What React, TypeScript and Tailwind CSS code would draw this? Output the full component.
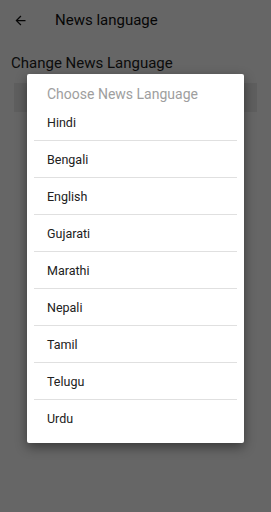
import React from "react";

const langs = ["Hindi", "Bengali", "English", "Gujarati", "Marathi", "Nepali", "Tamil", "Telugu", "Urdu"];

export default function App() {
  return (
    <div className="relative w-[271px] h-[512px] bg-white overflow-hidden" style={{ fontFamily: "Roboto, 'Noto Sans', sans-serif" }}>
      <div className="flex items-center h-[40px] pl-[13px]">
        <svg width="15" height="15" viewBox="0 0 24 24" className="text-[#111]">
          <path d="M20 11H7.83l5.59-5.59L12 4l-8 8 8 8 1.41-1.41L7.83 13H20v-2z" fill="currentColor" />
        </svg>
        <div className="ml-[27px] text-[15px] text-[#111]">News language</div>
      </div>
      <div className="pl-[11px] pt-[13px] text-[15px] leading-[20px] text-[#222]">Change News Language</div>
      <div className="mx-[14px] mt-[10px] h-[29px] bg-[#eeeeee]" />
      <div className="absolute inset-0 bg-black/60" />
      <div className="absolute left-[27px] top-[74px] w-[217px] h-[369px] bg-white rounded-[2px] shadow-[0_4px_12px_rgba(0,0,0,0.45)] flex flex-col">
        <div className="h-[29.5px] flex items-end pl-[20px] text-[14px] text-[#9e9e9e] leading-[18px] pb-[1px]">Choose News Language</div>
        {langs.map((l, i) => (
          <div key={l} className={`mx-[7px] h-[37px] flex items-center pl-[13px] pt-[3px] text-[12.5px] text-[#212121] ${i < langs.length - 1 ? "border-b border-[#e0e0e0]" : ""}`}>
            {l}
          </div>
        ))}
      </div>
    </div>
  );
}
